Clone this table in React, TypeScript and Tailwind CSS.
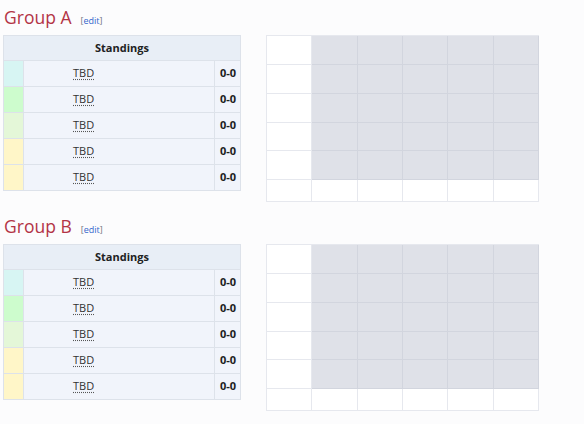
import { Fragment } from 'react';

const rowColors = ['bg-[#d7f5f3]', 'bg-[#cdfccd]', 'bg-[#e4f7d8]', 'bg-[#fff6c8]', 'bg-[#fff6c8]'];

function Standings() {
  return (
    <div className="w-[238px] shrink-0 border border-[#dde2ea] bg-[#f1f4fb] text-[11px] text-[#202122]">
      <div className="flex h-[24px] items-center justify-center bg-[#e8eef6] font-bold">Standings</div>
      {rowColors.map((color, i) => (
        <div key={i} className="flex h-[26px] border-t border-[#dde2ea]">
          <div className={`w-[20px] border-r border-[#dde2ea] ${color}`} />
          <div className="flex flex-1 items-center pl-[49px]">
            <span className="underline decoration-dotted decoration-[#555] underline-offset-2 text-[#333]">TBD</span>
          </div>
          <div className="flex w-[26px] items-center justify-end border-l border-[#dde2ea] pr-[4px] font-bold">0-0</div>
        </div>
      ))}
    </div>
  );
}

function Matrix() {
  const rows = [29, 29, 29, 28, 29, 22];
  return (
    <div className="grid w-[273px] grid-cols-6 border-l border-t border-[#e6e8ee] bg-white">
      {rows.map((h, r) => (
        <Fragment key={r}>
          {[0, 1, 2, 3, 4, 5].map((c) => {
            const gray = r < 5 && c > 0;
            return (
              <div
                key={c}
                style={{ height: h }}
                className={gray ? 'border-b border-r border-[#d2d5de] bg-[#dfe1e8]' : 'border-b border-r border-[#e6e8ee] bg-white'}
              />
            );
          })}
        </Fragment>
      ))}
    </div>
  );
}

function Group({ name }: { name: string }) {
  return (
    <div className="mb-[12px]">
      <div className="flex h-[24px] items-baseline gap-[9px] pl-[1px]">
        <h2 className="text-[17.5px] leading-[24px] text-[#b33446]">{name}</h2>
        <span className="text-[9px] text-[#72777d]">
          [<span className="text-[#3366cc]">edit</span>]
        </span>
      </div>
      <div className="mt-[6px] flex items-start gap-[25px]">
        <Standings />
        <Matrix />
      </div>
    </div>
  );
}

export default function App() {
  return (
    <div className="min-h-[424px] w-[584px] bg-[#fcfcfd] pl-[3px] pt-[5px] font-['Open_Sans',sans-serif]">
      <Group name="Group A" />
      <Group name="Group B" />
    </div>
  );
}
